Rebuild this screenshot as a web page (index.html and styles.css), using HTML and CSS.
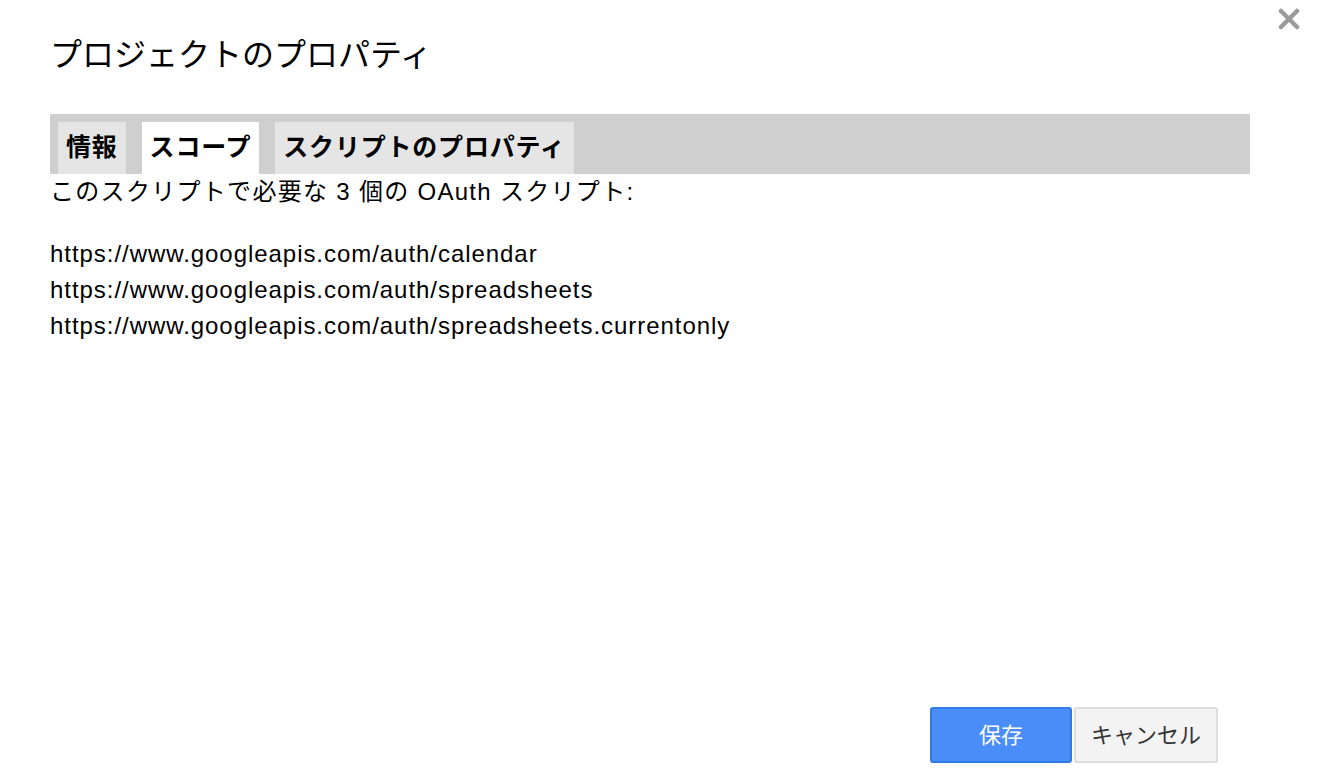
FILE: index.html
```html
<!DOCTYPE html>
<html lang="ja">
<head>
  <meta charset="utf-8">
  <link rel="stylesheet" href="styles.css">
</head>
<body>
  <div class="dialog">
    <button class="close" type="button" aria-label="閉じる">
      <svg width="22" height="22" viewBox="0 0 22 22"><path d="M3 3 L19 19 M19 3 L3 19" stroke="#9a9a9a" stroke-width="4.5" stroke-linecap="round"/></svg>
    </button>
    <h2 class="title">プロジェクトのプロパティ</h2>
    <div class="tabs">
      <span class="tab">情報</span>
      <span class="tab active">スコープ</span>
      <span class="tab">スクリプトのプロパティ</span>
    </div>
    <div class="content">
      <p class="lead">このスクリプトで必要な 3 個の OAuth スクリプト:</p>
      <ul class="scopes">
        <li>https://www.googleapis.com/auth/calendar</li>
        <li>https://www.googleapis.com/auth/spreadsheets</li>
        <li>https://www.googleapis.com/auth/spreadsheets.currentonly</li>
      </ul>
    </div>
    <div class="buttons">
      <button type="button" class="btn save">保存</button>
      <button type="button" class="btn cancel">キャンセル</button>
    </div>
  </div>
</body>
</html>
```

FILE: styles.css
```css
html, body {margin: 0; padding: 0; background: #fff;}
body {font-family: "Liberation Sans", Arial, "Noto Sans CJK JP", sans-serif; color: #000;}
.dialog {position: relative; width: 1320px; height: 774px; box-sizing: border-box; padding: 0 70px 0 50px; display: flex; flex-direction: column;}
.close {position: absolute; top: 8px; right: 20px; padding: 0; border: 0; background: transparent; width: 22px; height: 22px; filter: blur(0.6px);}
.close svg {display: block;}
.title {margin: 36px 0 0; font-size: 32px; font-weight: normal; line-height: 38px; height: 42px;}
.tabs {margin-top: 36px; background: #cfcfcf; height: 60px; box-sizing: border-box; padding: 8px 8px 0; display: flex; gap: 16px;}
.tab {background: #e5e5e5; font-size: 25px; letter-spacing: 0.8px; font-weight: bold; padding: 2px 8px 0 8px; line-height: 46px; height: 52px; box-sizing: border-box;}
.tab.active {background: #fff;}
.content {flex: 1;}
.lead {margin: 2px 0 0; font-size: 24px; letter-spacing: 1.3px; line-height: 32px;}
.scopes {list-style: none; margin: 28px 0 0; padding: 0; font-size: 24px; letter-spacing: 0.95px; line-height: 36px;}
.buttons {display: flex; justify-content: flex-end; gap: 2px; padding-right: 32px; margin-bottom: 11px;}
.btn {height: 56px; padding-bottom: 5px; font-family: "Noto Sans CJK JP", sans-serif; font-size: 22px; border-radius: 3px; border: 2px solid; cursor: pointer;}
.save {width: 142px; background: #4a8df8; border-color: #2f7ce8; color: #fff;}
.cancel {width: 144px; background: #f3f3f3; border-color: #dcdcdc; color: #333;}
```
